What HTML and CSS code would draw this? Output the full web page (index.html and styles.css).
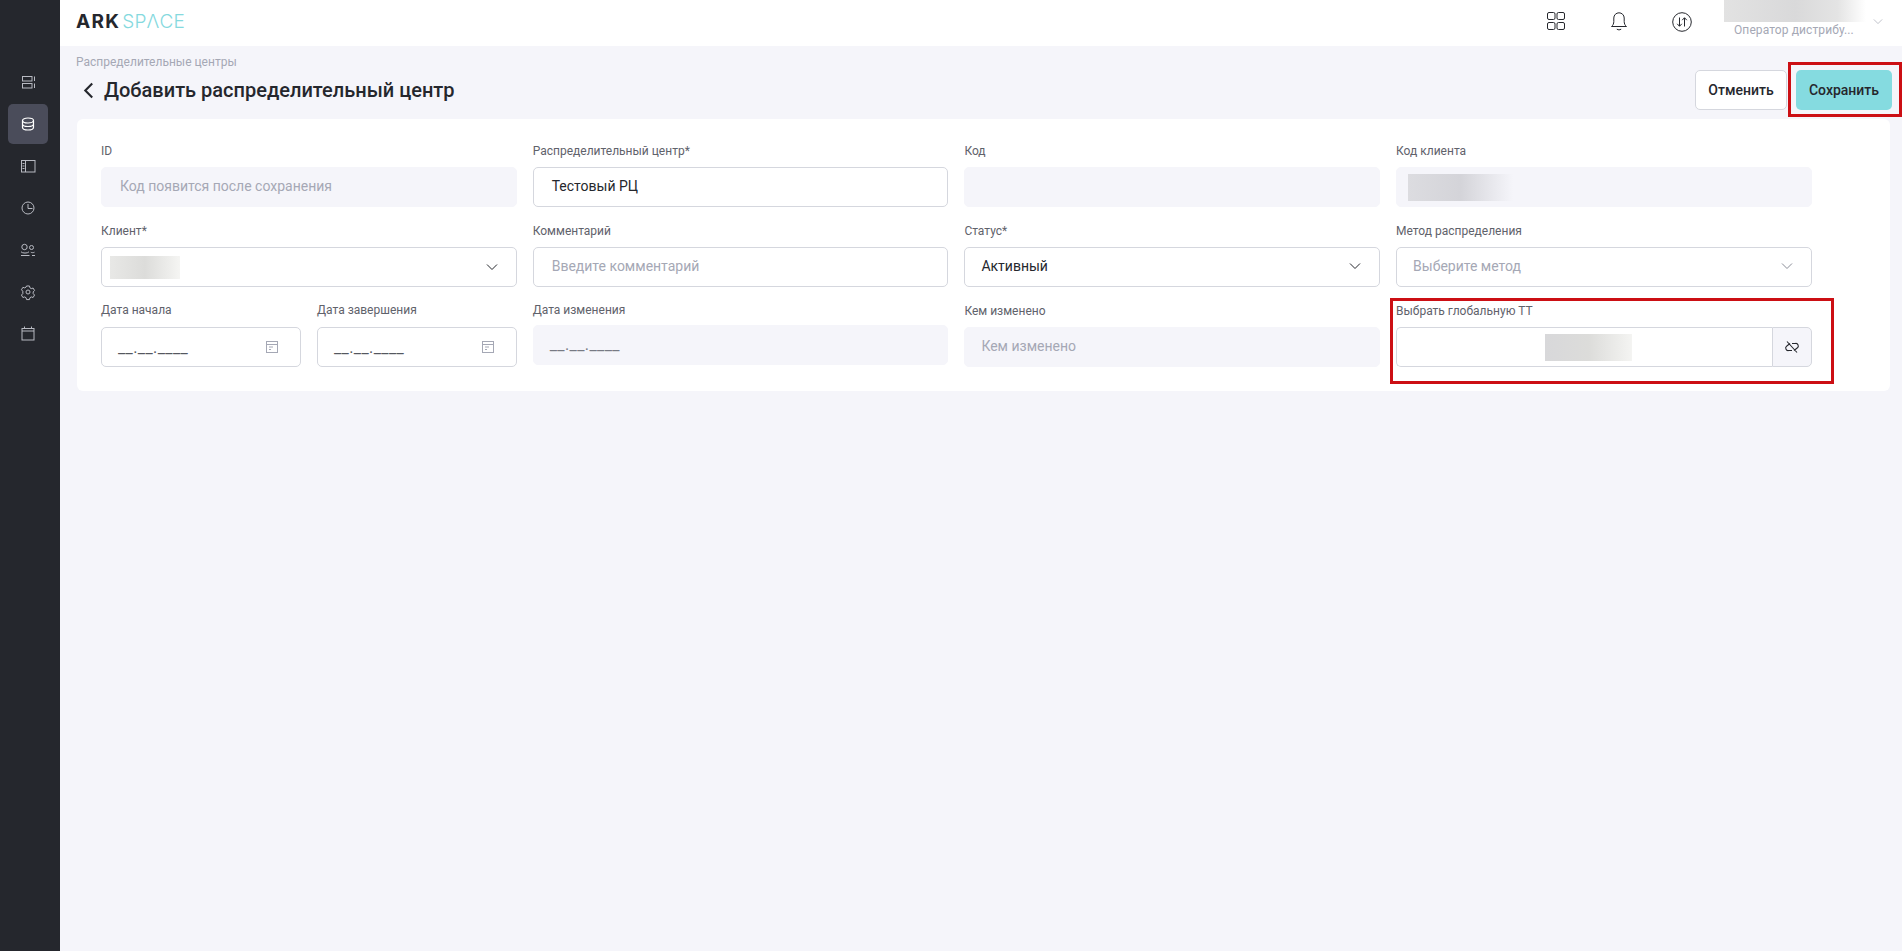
FILE: index.html
```html
<!DOCTYPE html>
<html lang="ru">
<head>
<meta charset="utf-8">
<title>Добавить распределительный центр</title>
<link rel="stylesheet" href="styles.css">
</head>
<body>
<div class="app">
  <aside class="sidebar">
    <div class="nav-item">
      <svg class="nav-icon" viewBox="0 0 16 16"><rect x="2.500" y="2.500" width="9.500" height="4.500"/><rect x="2.500" y="9.500" width="9.500" height="4.500"/><path d="M14.500 2.500V7M14.500 9.500V14"/></svg>
    </div>
    <div class="nav-item nav-item-active">
      <svg class="nav-icon" viewBox="0 0 16 16"><ellipse cx="8" cy="4.500" rx="5.500" ry="2.500"/><path d="M2.500 4.500v7c0 1.400 2.500 2.500 5.500 2.500s5.500-1.100 5.500-2.500v-7M2.500 8c0 1.400 2.500 2.500 5.500 2.500s5.500-1.100 5.500-2.500"/></svg>
    </div>
    <div class="nav-item">
      <svg class="nav-icon" viewBox="0 0 16 16"><rect x="1.500" y="2.500" width="13.500" height="11.500"/><path d="M5.500 2.500V14M2.500 5.500h2M2.500 8h2M2.500 10.500h2"/></svg>
    </div>
    <div class="nav-item">
      <svg class="nav-icon" viewBox="0 0 16 16"><circle cx="8" cy="8" r="6"/><path d="M8 4v4.500h4.500"/></svg>
    </div>
    <div class="nav-item">
      <svg class="nav-icon" viewBox="0 0 16 16"><circle cx="4.500" cy="5" r="2.700"/><circle cx="11.500" cy="5.500" r="2"/><path d="M1 9.800c1.500 1.700 6.500 1.700 8 0M1 13.500h8.500M10.800 10.200c1 .6 2.700.6 3.700 0M12 13.500h3"/></svg>
    </div>
    <div class="nav-item">
      <svg class="nav-icon" viewBox="0 0 16 16"><g transform="translate(0 .7) scale(.8)"><path class="gear" d="M8.200 2.500h3.600l.6 2.300 1.700 1 2.300-.7 1.800 3.100-1.700 1.700v2.200l1.700 1.700-1.800 3.100-2.300-.7-1.700 1-.6 2.300H8.200l-.6-2.300-1.700-1-2.300.7-1.800-3.100 1.700-1.700V9l-1.700-1.700L3.600 4.200l2.300.7 1.700-1z" transform="translate(0 -.9)"/></g><circle cx="8" cy="8" r="2"/></svg>
    </div>
    <div class="nav-item">
      <svg class="nav-icon" viewBox="0 0 16 16"><rect x="2" y="2.500" width="12" height="11.500"/><path d="M2 5h12M4.500 .5v2M11.500 .5v2"/></svg>
    </div>
  </aside>

  <div class="main">
    <header class="topbar">
      <div class="logo"><span class="logo-dark">ARK</span><span class="logo-light">SPΛCE</span></div>
      <div class="top-actions">
        <svg class="top-icon top-icon-grid" viewBox="0 0 20 20"><rect x="1.500" y="1.500" width="7.500" height="7" rx="1.500"/><rect x="11" y="1.500" width="7.500" height="7" rx="1.500"/><rect x="1.500" y="11.500" width="7.500" height="7" rx="1.500"/><rect x="11" y="11.500" width="7.500" height="7" rx="1.500"/></svg>
        <svg class="top-icon top-icon-bell" viewBox="0 0 20 20"><path d="M2.500 15.500c1.500-1 2.300-3 2.300-5V7a5.200 5.200 0 0 1 10.400 0v3.500c0 2 .8 4 2.300 5z"/><path d="M7.800 18.200q2.200 1.500 4.400 0"/></svg>
        <svg class="top-icon top-icon-swap" viewBox="0 0 20 20"><circle cx="10" cy="10" r="9.300"/><path d="M7.500 5.500v8.500M5.200 11.800l2.300 2.500 2.300-2.500M12.500 14.500V6M10.200 8.200l2.300-2.500 2.300 2.500"/></svg>
        <div class="user">
          <div class="user-name"></div>
          <div class="user-role">Оператор дистрибу...</div>
        </div>
        <svg class="user-chevron" viewBox="0 0 12 8"><path d="M1 1.500l5 5 5-5"/></svg>
      </div>
    </header>

    <main class="page">
      <div class="breadcrumb">Распределительные центры</div>
      <div class="page-head">
        <h1 class="page-title">
          <svg class="back-icon" viewBox="0 0 10 16"><path d="M8.500 1.500L2 8l6.500 6.500"/></svg>
          Добавить распределительный центр
        </h1>
        <div class="page-actions">
          <button class="btn btn-plain">Отменить</button>
          <button class="btn btn-primary">Сохранить</button>
        </div>
      </div>

      <section class="card">
        <div class="form-grid">
          <div class="field">
            <label class="label">ID</label>
            <div class="control control-off"><span class="ph">Код появится после сохранения</span></div>
          </div>
          <div class="field">
            <label class="label">Распределительный центр*</label>
            <div class="control">Тестовый РЦ</div>
          </div>
          <div class="field">
            <label class="label">Код</label>
            <div class="control control-off"></div>
          </div>
          <div class="field">
            <label class="label">Код клиента</label>
            <div class="control control-off control-tight"><span class="blur blur-code"></span></div>
          </div>

          <div class="field">
            <label class="label">Клиент*</label>
            <div class="control control-select control-client">
              <span class="blur blur-client"></span>
              <svg class="chevron" viewBox="0 0 12 8"><path d="M1 1.500l5 5 5-5"/></svg>
            </div>
          </div>
          <div class="field">
            <label class="label">Комментарий</label>
            <div class="control"><span class="ph">Введите комментарий</span></div>
          </div>
          <div class="field">
            <label class="label">Статус*</label>
            <div class="control control-select control-status">
              <span>Активный</span>
              <svg class="chevron" viewBox="0 0 12 8"><path d="M1 1.500l5 5 5-5"/></svg>
            </div>
          </div>
          <div class="field">
            <label class="label">Метод распределения</label>
            <div class="control control-select control-status">
              <span class="ph">Выберите метод</span>
              <svg class="chevron chevron-muted" viewBox="0 0 12 8"><path d="M1 1.500l5 5 5-5"/></svg>
            </div>
          </div>

          <div class="field-pair">
            <div class="field field-date">
              <label class="label">Дата начала</label>
              <div class="control control-date">
                <span class="mask">__.__.____</span>
                <svg class="cal" viewBox="0 0 14 14"><rect x="1.500" y="1.500" width="11" height="11"/><path d="M1.500 4.500h11M4 7h4M4 9.500h2"/></svg>
              </div>
            </div>
            <div class="field field-date">
              <label class="label">Дата завершения</label>
              <div class="control control-date">
                <span class="mask">__.__.____</span>
                <svg class="cal" viewBox="0 0 14 14"><rect x="1.500" y="1.500" width="11" height="11"/><path d="M1.500 4.500h11M4 7h4M4 9.500h2"/></svg>
              </div>
            </div>
          </div>
          <div class="field field-raised">
            <label class="label">Дата изменения</label>
            <div class="control control-off control-mask"><span class="mask mask-narrow">__.__.____</span></div>
          </div>
          <div class="field">
            <label class="label">Кем изменено</label>
            <div class="control control-off control-status"><span class="ph">Кем изменено</span></div>
          </div>
          <div class="field">
            <label class="label">Выбрать глобальную ТТ</label>
            <div class="link-row">
              <div class="link-value"><span class="blur blur-global"></span></div>
              <button class="link-btn">
                <svg class="link-icon" viewBox="0 0 16 16"><path d="M6 4.500L2.800 7a2.500 2.500 0 0 0 2 4.500H8M10 11.500l3.200-2.500a2.500 2.500 0 0 0-2-4.500H8M3 2.500l10 11"/></svg>
              </button>
            </div>
          </div>
        </div>
      </section>
    </main>
  </div>
</div>
<div class="mark mark-save"></div>
<div class="mark mark-global"></div>
</body>
</html>
```
FILE: styles.css
```css
* { box-sizing: border-box; }
html, body { margin: 0; height: 100%; }
body {
  font-family: Roboto, "Noto Sans", sans-serif;
  color: #25272d;
  background: #f5f5fa;
  overflow: hidden;
}
.app { display: flex; height: 951px; }

.sidebar {
  width: 60px;
  flex: none;
  background: #25272d;
  display: flex;
  flex-direction: column;
  align-items: center;
  gap: 2px;
  padding: 62px 4px 0 0;
}
.nav-item {
  width: 40px;
  height: 40px;
  border-radius: 5px;
  display: flex;
  align-items: center;
  justify-content: center;
}
.nav-item-active { background: #4a4c5a; }
.nav-icon { width: 16px; height: 16px; fill: none; stroke: #b8bac2; stroke-width: 1; overflow: visible; }
.gear { stroke-linejoin: round; stroke-width: 1.250; }
.nav-item-active .nav-icon { stroke: #fff; stroke-width: 1.200; }

.main { flex: 1; min-width: 0; display: flex; flex-direction: column; }

.topbar {
  height: 46px;
  flex: none;
  background: #fff;
  display: flex;
  align-items: center;
  justify-content: space-between;
  padding: 0 19px 0 16px;
}
.logo { display: flex; align-items: center; font-size: 19px; line-height: 22px; margin-bottom: 2px; font-family: Inter, sans-serif; }
.logo-dark { font-weight: 700; color: #25272d; letter-spacing: 1.300px; }
.logo-light { font-weight: 300; color: #85d9de; letter-spacing: .2px; margin-left: 2px; }

.top-actions { display: flex; align-items: center; height: 46px; }
.top-icon { width: 20px; height: 20px; fill: none; stroke: #25272d; stroke-width: 1; margin-right: 43px; margin-bottom: 4px; }
.top-icon-swap { margin-right: 32px; margin-bottom: 2px; }
.user { width: 142px; align-self: flex-start; }
.user-name {
  height: 22px;
  background: linear-gradient(90deg, #e2e2e2 0%, #d9d9da 50%, #e4e4e4 80%, #fff 100%);
}
.user-role {
  font-size: 12px;
  line-height: 14px;
  margin: 1px 0 0 10px;
  color: #a5a8b5;
  letter-spacing: .1px;
  white-space: nowrap;
}
.user-chevron { width: 10px; height: 7px; margin-left: 7px; margin-bottom: 4px; fill: none; stroke: #b5b7c0; stroke-width: 1; }

.page { padding: 9px 10px 0 16px; }
.breadcrumb { font-size: 12px; line-height: 14px; color: #a5a8b5; }
.page-head {
  display: flex;
  justify-content: space-between;
  align-items: flex-start;
  margin-top: 1px;
  height: 49px;
}
.page-title {
  margin: 0;
  display: flex;
  align-items: center;
  gap: 10px;
  font-size: 20px;
  font-weight: 500;
  line-height: 30px;
  padding: 5px 0 0 7px;
  color: #25272d;
}
.back-icon { width: 11px; height: 17px; fill: none; stroke: #25272d; stroke-width: 2; }
.page-actions { display: flex; gap: 9px; margin-top: 0; }
.btn {
  height: 40px;
  padding-bottom: 2px;
  border-radius: 5px;
  font-family: inherit;
  font-size: 14px;
  font-weight: 500;
  color: #25272d;
  cursor: pointer;
}
.btn-plain { width: 92px; background: #fff; border: 1px solid #d5d7de; }
.btn-primary { width: 96px; background: #85dbe0; border: 0; }

.card {
  width: 1813px;
  height: 272px;
  margin-left: 1px;
  background: #fff;
  border-radius: 6px;
  padding: 24px 77px 0 24px;
}
.form-grid {
  display: grid;
  grid-template-columns: repeat(4, 415.5px);
  column-gap: 16.200px;
  row-gap: 16px;
}
.field { display: flex; flex-direction: column; min-width: 0; }
.field-pair { display: grid; grid-template-columns: repeat(2, 199.500px); column-gap: 16.500px; }
.field-date .label { margin-top: -1px; margin-bottom: 9px; }
.field-raised .label { margin-top: -1px; }
.field-raised .control { height: 40px; margin-top: -1px; }
.label {
  display: block;
  font-size: 12px;
  line-height: 16px;
  height: 16px;
  margin-bottom: 8px;
  color: #5f626b;
  white-space: nowrap;
}
.control {
  height: 40px;
  border: 1px solid #d5d7de;
  border-radius: 5px;
  background: #fff;
  padding: 0 18px 2px;
  display: flex;
  align-items: center;
  font-size: 14px;
  color: #25272d;
}
.control-off { background: #f5f5fa; border-color: #f5f5fa; }
.control-tight { padding: 0 0 0 11px; }
.control-select { justify-content: space-between; padding-right: 18px; }
.control-client { padding: 0 18px 0 8px; }
.control-status { padding-left: 16px; }
.control-date { justify-content: space-between; padding: 0 21px 0 16px; }
.control-mask { padding-left: 16px; }
.ph { color: #a5a8b5; }
.mask { color: #55585f; font-size: 16px; position: relative; top: 0; letter-spacing: .4px; }
.mask-narrow { color: #777a83; }
.chevron { width: 12px; height: 8px; fill: none; stroke: #25272d; stroke-width: 1; }
.chevron-muted { stroke: #8a8d97; }
.cal { width: 14px; height: 14px; fill: none; stroke: #a5a8b5; stroke-width: 1; }

.blur { display: block; }
.blur-code { width: 105px; height: 27px; background: linear-gradient(90deg, #dcdce0 0%, #d4d4d9 50%, #f5f5fa 100%); }
.blur-client { width: 70px; height: 23px; background: linear-gradient(90deg, #e8e8e6 0%, #dcdcda 50%, #f5f5f3 100%); }
.blur-global { width: 87px; height: 27px; margin-left: 9px; background: linear-gradient(90deg, #d8d8da 0%, #dcdcda 50%, #f4f4f2 100%); }

.link-row { display: flex; height: 40px; }
.link-value {
  flex: 1;
  border: 1px solid #d5d7de;
  border-right: 0;
  border-radius: 5px 0 0 5px;
  display: flex;
  align-items: center;
  justify-content: center;
}
.link-btn {
  width: 40px;
  padding: 0;
  border: 1px solid #d5d7de;
  border-radius: 0 5px 5px 0;
  background: #f5f5fa;
  display: flex;
  align-items: center;
  justify-content: center;
}
.link-icon { width: 16px; height: 16px; fill: none; stroke: #25272d; stroke-width: 1.100; }

.mark { position: absolute; border: 3px solid #cc0f14; pointer-events: none; }
.mark-save { left: 1788px; top: 62px; width: 114px; height: 55px; }
.mark-global { left: 1390px; top: 298px; width: 444px; height: 86px; }
```
